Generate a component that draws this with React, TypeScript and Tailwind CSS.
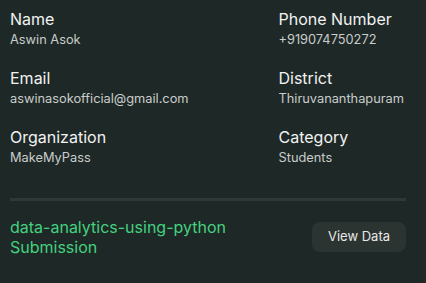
export default function App() {
  return (
    <div className="flex h-[283px] w-[426px] bg-[#1e2927] font-['Inter',sans-serif]">
      <div className="flex-1 pl-[10px] pr-[16px] pt-[7px]">
        <div className="flex justify-between">
          <div className="flex flex-col gap-[17px]">
            <Field label="Name" value="Aswin Asok" />
            <Field label="Email" value="aswinasokofficial@gmail.com" />
            <Field label="Organization" value="MakeMyPass" />
          </div>
          <div className="flex flex-col gap-[17px] pr-[2px]">
            <Field label="Phone Number" value="+919074750272" />
            <Field label="District" value="Thiruvananthapuram" />
            <Field label="Category" value="Students" />
          </div>
        </div>
        <div className="mt-[31px] h-[3px] bg-[#2f3836]" />
        <div className="mt-[16px] flex items-center justify-between">
          <div className="text-base leading-[20px] text-[#45d07f]">
            <p>data-analytics-using-python</p>
            <p>Submission</p>
          </div>
          <button className="h-[30px] rounded-lg bg-[#2c3432] px-[16px] text-[13px] text-[#e8e8e8]">
            View Data
          </button>
        </div>
      </div>
      <div className="w-[4px] bg-[#262626]" />
    </div>
  );
}

function Field({ label, value }: { label: string; value: string }) {
  return (
    <div className="flex flex-col">
      <span className="text-base leading-[24px] text-[#f2f2f2]">{label}</span>
      <span className="text-[12.8px] leading-[18px] text-[#c9cccb]">{value}</span>
    </div>
  );
}
